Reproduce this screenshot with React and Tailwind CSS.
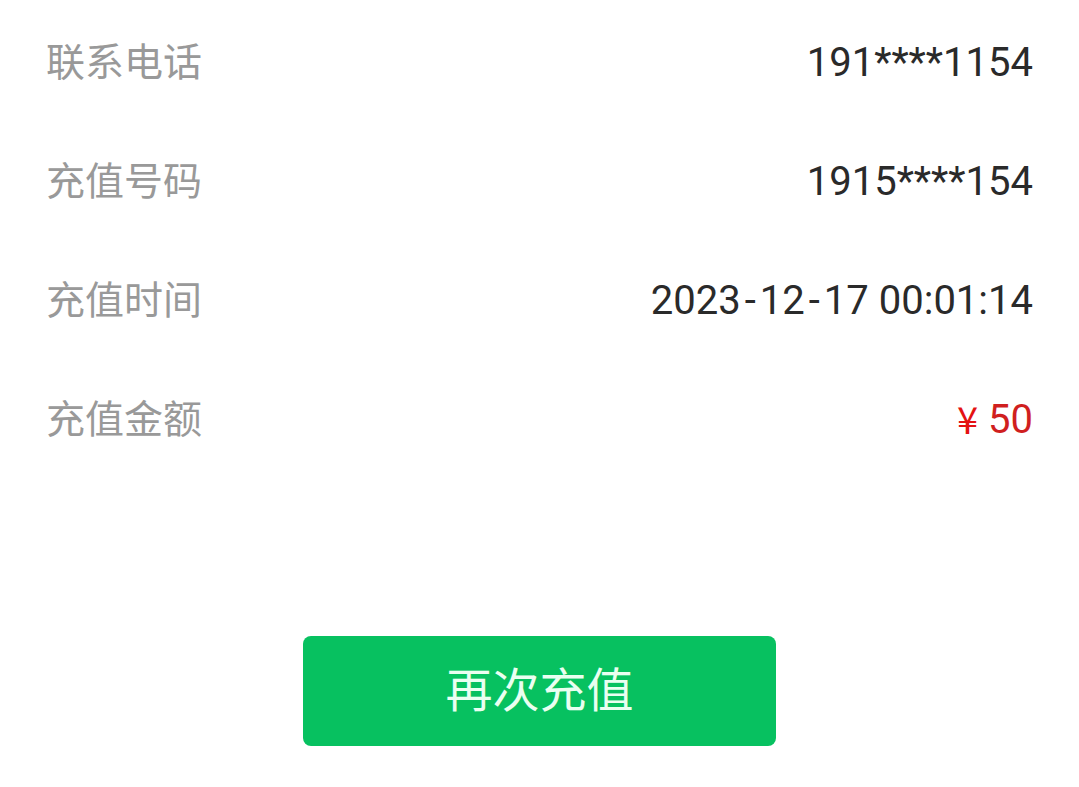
function Sep({ children }) {
  return <span className="px-[4px]">{children}</span>;
}

export default function App() {
  const rows = [
    { label: "联系电话", value: "191****1154" },
    { label: "充值号码", value: "1915****154" },
  ];
  return (
    <div className="w-[1079px] h-[787px] bg-white overflow-hidden">
      <div className="pt-[3px] px-[46px]">
        {rows.map((r) => (
          <div key={r.label} className="h-[119px] flex items-center justify-between">
            <span className="-mt-[7px] text-[39px] text-[#999999] font-['Noto_Sans_CJK_SC',sans-serif]">{r.label}</span>
            <span className="text-[40px] text-[#2a2a2a] font-['Roboto',sans-serif]">{r.value}</span>
          </div>
        ))}
        <div className="h-[119px] flex items-center justify-between">
          <span className="-mt-[7px] text-[39px] text-[#999999] font-['Noto_Sans_CJK_SC',sans-serif]">充值时间</span>
          <span className="text-[40px] text-[#2a2a2a] font-['Roboto',sans-serif]">
            2023<Sep>-</Sep>12<Sep>-</Sep>17 00:01:14
          </span>
        </div>
        <div className="h-[119px] flex items-center justify-between">
          <span className="-mt-[7px] text-[39px] text-[#999999] font-['Noto_Sans_CJK_SC',sans-serif]">充值金额</span>
          <span className="flex items-center gap-[10px] text-[40px] text-[#d01f1f] font-['Roboto',sans-serif]">
            <span className="-mt-[4px] text-[38px] text-[#e41212] font-['Noto_Sans_CJK_SC',sans-serif]">¥</span>
            <span>50</span>
          </span>
        </div>
      </div>
      <div className="flex justify-center mt-[157px]">
        <button className="w-[473px] h-[110px] pb-[8px] rounded-[8px] bg-[#07c160] text-[#eafff1] text-[47px] font-['Noto_Sans_CJK_SC',sans-serif]">
          再次充值
        </button>
      </div>
    </div>
  );
}
